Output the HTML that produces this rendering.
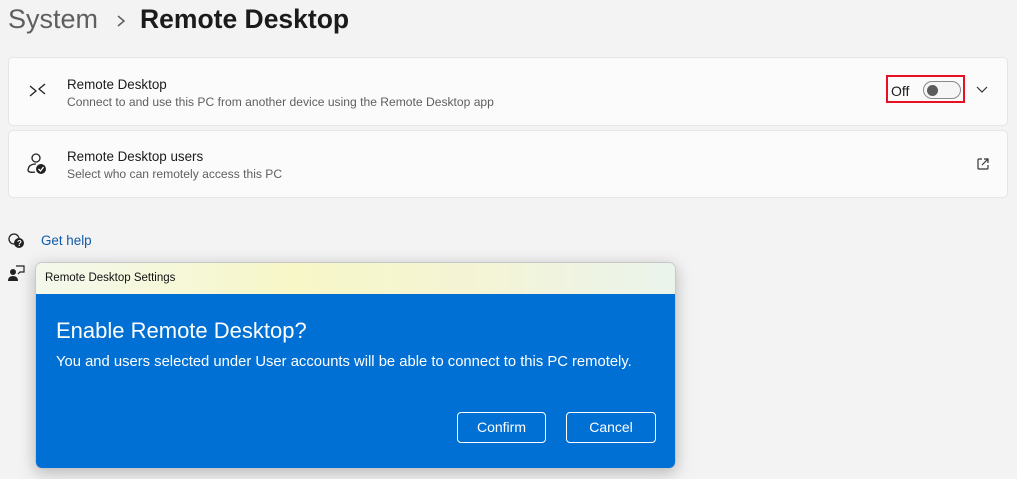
<!DOCTYPE html>
<html><head><style>
body{margin:0;width:1017px;height:479px;background:#f3f3f3;font-family:"Liberation Sans",sans-serif;position:relative;overflow:hidden;color:#1b1b1b}
.a{position:absolute}
.card{position:absolute;left:8px;width:998px;background:#fbfbfb;border:1px solid #e5e5e5;border-radius:5px}
.t{font-size:13.4px;color:#1b1b1b}
.s{font-size:12.1px;color:#5f5f5f}
.btn{position:absolute;top:412px;height:29px;border:1.5px solid #fff;border-radius:4px;color:#fff;font-size:14px;text-align:center;line-height:29px;box-sizing:content-box}
</style></head><body>
<div class="a" style="left:8px;top:4px;font-size:27px;color:#5f5f5f">System</div>
<svg class="a" style="left:115px;top:14px" width="12" height="14"><path d="M3 2 L9 7 L3 12" stroke="#5f5f5f" stroke-width="1.5" fill="none"/></svg>
<div class="a" style="left:140px;top:4px;font-size:26.5px;font-weight:bold;color:#1b1b1b">Remote Desktop</div>

<div class="card" style="top:57px;height:67px"></div>
<svg class="a" style="left:28px;top:82px" width="20" height="20"><path d="M2 4 L8 9 L2 14 M17 2 L11 7 L17 12" stroke="#222" stroke-width="1.3" fill="none"/></svg>
<div class="a t" style="left:67px;top:77px">Remote Desktop</div>
<div class="a s" style="left:67px;top:95px">Connect to and use this PC from another device using the Remote Desktop app</div>
<div class="a" style="left:886px;top:75px;width:79px;height:28px;border:2px solid #e81123;box-sizing:border-box"></div>
<div class="a" style="left:891px;top:83px;font-size:14px">Off</div>
<div class="a" style="left:923px;top:81px;width:38px;height:18px;border:1px solid #8a8a8a;border-radius:10px;box-sizing:border-box;background:#f6f6f6"></div>
<div class="a" style="left:927px;top:85px;width:11px;height:11px;border-radius:50%;background:#5c5c5c"></div>
<svg class="a" style="left:975px;top:84px" width="14" height="10"><path d="M2 3 L7 8 L12 3" stroke="#333" stroke-width="1.2" fill="none"/></svg>

<div class="card" style="top:130px;height:66px"></div>
<svg class="a" style="left:25px;top:152px" width="24" height="24"><circle cx="11" cy="6" r="4" stroke="#222" stroke-width="1.3" fill="none"/><path d="M3 19 Q3 12 11 12 M3 19 Q5 21 10 20" stroke="#222" stroke-width="1.3" fill="none"/><circle cx="16" cy="17" r="5" fill="#222"/><path d="M13.5 17 L15.5 19 L18.5 15" stroke="#fff" stroke-width="1.3" fill="none"/></svg>
<div class="a t" style="left:67px;top:149px">Remote Desktop users</div>
<div class="a s" style="left:67px;top:167px">Select who can remotely access this PC</div>
<svg class="a" style="left:976px;top:157px" width="14" height="14"><path d="M6 2 H3 Q2 2 2 3 V11 Q2 12 3 12 H11 Q12 12 12 11 V8 M8 2 H12 V6 M12 2 L6 8" stroke="#333" stroke-width="1.2" fill="none"/></svg>

<svg class="a" style="left:7px;top:232px" width="18" height="18"><circle cx="7" cy="7" r="5" stroke="#222" stroke-width="1.3" fill="none"/><circle cx="12" cy="11" r="5" fill="#222"/><text x="10" y="14" font-size="8" fill="#fff" font-family="Liberation Sans" font-weight="bold">?</text></svg>
<div class="a" style="left:41px;top:233px;font-size:13.4px;color:#0f5aa8">Get help</div>
<svg class="a" style="left:8px;top:264px" width="18" height="18"><circle cx="5" cy="8" r="3" fill="#222"/><path d="M0 17 Q0 12 5 12 Q10 12 10 17Z" fill="#222"/><path d="M8 2 H16 V8 H12 L10 10" stroke="#222" stroke-width="1.2" fill="none"/></svg>

<div class="a" style="left:35px;top:262px;width:641px;height:207px;border-radius:7px;overflow:hidden;box-shadow:0 4px 16px rgba(0,0,0,0.25);border:1px solid #c8c8c8;box-sizing:border-box">
 <div style="height:31px;background:linear-gradient(90deg,#f4f8ec,#f7f7c8 40%,#f4f4d6 70%,#eaf4ec);font-size:11.5px;line-height:31px;padding-left:9px;color:#111">Remote Desktop Settings</div>
 <div style="height:176px;background:#0170d4;position:relative">
  <div class="a" style="left:20px;top:24px;font-size:22px;color:#fff">Enable Remote Desktop?</div>
  <div class="a" style="left:20px;top:60px;font-size:14.8px;color:#fff">You and users selected under User accounts will be able to connect to this PC remotely.</div>
 </div>
</div>
<div class="btn" style="left:457px;width:87px">Confirm</div>
<div class="btn" style="left:566px;width:88px">Cancel</div>
</body></html>
